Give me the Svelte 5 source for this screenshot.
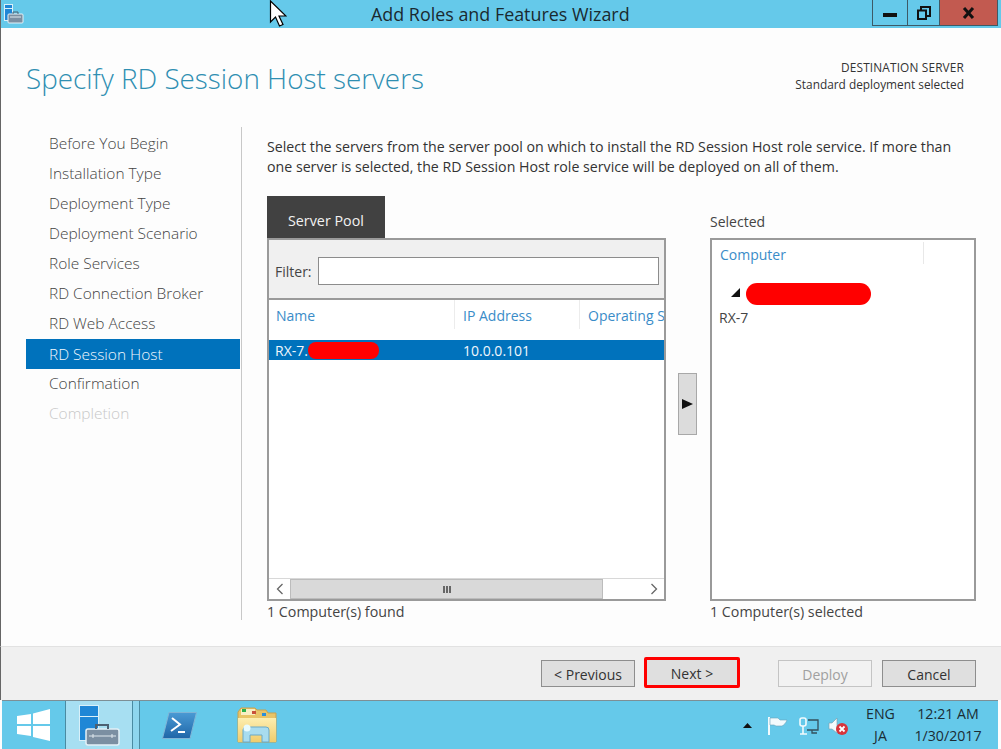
<script>
  const steps = [
    "Before You Begin", "Installation Type", "Deployment Type", "Deployment Scenario",
    "Role Services", "RD Connection Broker", "RD Web Access", "RD Session Host",
    "Confirmation", "Completion"
  ];
  const activeStep = "RD Session Host";
</script>

<div class="window">
  <header class="titlebar">
    <svg class="app-icon" width="20" height="20" viewBox="0 0 20 20">
      <rect x="0" y="0" width="9" height="17" fill="#d9f0f9" />
      <rect x="1" y="1" width="7" height="3" fill="#1f87d6" />
      <rect x="1" y="5" width="7" height="11" fill="#1f87d6" />
      <rect x="4" y="10" width="15" height="9" rx="1" fill="#7b8fa2" stroke="#e4f1f7" />
      <path d="M9 10V8h5v2" fill="none" stroke="#4c6072" />
      <path d="M6 13h11" stroke="#dfe9ef" />
    </svg>
    <div class="title">Add Roles and Features Wizard</div>
    <div class="controls">
      <div class="ctl">
        <span class="min"></span>
      </div>
      <div class="ctl restore">
        <svg width="14" height="14" viewBox="0 0 14 14"><path d="M1 4.500h8v8.500H1zM4 4V1h9v9h-3" fill="none" stroke="#111" stroke-width="2" /></svg>
      </div>
      <div class="ctl close">
        <svg width="14" height="12" viewBox="0 0 14 12"><path d="M2 1l9 10M11 1l-9 10" stroke="#111" stroke-width="3" /></svg>
      </div>
    </div>
  </header>

  <div class="page">
    <div class="page-head">
      <h1>Specify RD Session Host servers</h1>
      <div class="dest">
        <div class="dest-top">DESTINATION SERVER</div>
        <div>Standard deployment selected</div>
      </div>
    </div>

    <div class="main">
      <nav class="steps">
        {#each steps as step}
          <div class="step" class:active={step === activeStep} class:disabled={step === "Completion"}>{step}</div>
        {/each}
      </nav>

      <section class="content">
        <p class="intro">Select the servers from the server pool on which to install the RD Session Host role service. If more than one server is selected, the RD Session Host role service will be deployed on all of them.</p>

        <div class="pickers">
          <div class="pool">
            <div class="tab">Server Pool</div>
            <div class="box pool-box">
              <div class="filter">
                <label for="flt">Filter:</label>
                <input id="flt" type="text" />
              </div>
              <div class="cols">
                <span class="col c1">Name</span>
                <span class="col c2">IP Address</span>
                <span class="col c3">Operating System</span>
              </div>
              <div class="row">
                <span class="c1 cell">RX-7.<i class="redact small"></i></span>
                <span class="c2 cell">10.0.0.101</span>
              </div>
              <div class="spacer"></div>
              <div class="scrollbar">
                <span class="arrow"><svg width="8" height="12" viewBox="0 0 8 12"><path d="M6.500 1L1.500 6l5 5" fill="none" stroke="#666" stroke-width="1.300" /></svg></span>
                <span class="thumb"><i></i><i></i><i></i></span>
                <span class="track"></span>
                <span class="arrow"><svg width="8" height="12" viewBox="0 0 8 12"><path d="M1.500 1l5 5-5 5" fill="none" stroke="#666" stroke-width="1.300" /></svg></span>
              </div>
            </div>
            <div class="count">1 Computer(s) found</div>
          </div>

          <div class="mover">
            <div class="move-btn"><svg width="11" height="10" viewBox="0 0 11 10"><path d="M0 0l11 5-11 5z" fill="#111" /></svg></div>
          </div>

          <div class="selected">
            <div class="sel-label">Selected</div>
            <div class="box sel-box">
              <div class="sel-head"><span>Computer</span></div>
              <div class="tree-node">
                <svg width="9" height="9" viewBox="0 0 9 9"><path d="M9 0v9H0z" fill="#111" /></svg>
                <i class="redact big"></i>
              </div>
              <div class="leaf">RX-7</div>
            </div>
            <div class="count">1 Computer(s) selected</div>
          </div>
        </div>
      </section>
    </div>
  </div>

  <footer class="actions">
    <button>&lt; Previous</button>
    <button class="next">Next &gt;</button>
    <button class="deploy" disabled>Deploy</button>
    <button>Cancel</button>
  </footer>

  <div class="taskbar">
    <div class="tb-start">
      <svg width="33" height="32" viewBox="0 0 33 32"><path d="M0 7l14-2v10H0zM16 4.500L33 0v15H16zM0 17h14v10L0 25zM16 17h17v15l-17-4z" fill="#fff" /></svg>
    </div>
    <div class="tb-active">
      <svg width="41" height="41" viewBox="0 0 41 41">
        <rect x="0" y="0" width="20" height="36" fill="#d9f0f9" />
        <rect x="1" y="1" width="18" height="10" fill="#1f87d6" />
        <rect x="1" y="12" width="18" height="23" fill="#1f87d6" />
        <rect x="7" y="24" width="33" height="16" rx="2" fill="#7b8fa2" stroke="#e4f1f7" stroke-width="1.500" />
        <path d="M17 24v-4h12v4" fill="none" stroke="#4c6072" stroke-width="2" />
        <path d="M10 31h27M14 29v4M33 29v4" stroke="#e0e8ee" />
      </svg>
    </div>
    <div class="tb-sep"></div>
    <div class="tb-app ps">
      <svg width="35" height="27" viewBox="0 0 35 27">
        <defs>
          <linearGradient id="psfill" x1="0" y1="0" x2="0" y2="1">
            <stop offset="0" stop-color="#4a9ad4" />
            <stop offset="1" stop-color="#1f66a8" />
          </linearGradient>
        </defs>
        <path d="M7 .500h27.500L28 26.500H.500z" fill="url(#psfill)" stroke="#7fb4d6" />
        <path d="M10 6l8 6.500-9 6.500" fill="none" stroke="#fff" stroke-width="2" />
        <path d="M16 20h7" stroke="#fff" stroke-width="2" />
      </svg>
    </div>
    <div class="tb-app folder">
      <svg width="40" height="36" viewBox="0 0 40 36">
        <defs>
          <linearGradient id="folderfill" x1="0" y1="0" x2="0" y2="1">
            <stop offset="0" stop-color="#fdeeb0" />
            <stop offset="1" stop-color="#f0cc6c" />
          </linearGradient>
        </defs>
        <path d="M1 5l3-4h14l2 2h9l2 3h8v29H1z" fill="#e8c468" stroke="#c9a24f" />
        <rect x="4" y="2" width="14" height="6" fill="#f8eec4" />
        <rect x="5" y="2" width="4" height="3" fill="#2bb24c" />
        <rect x="15" y="4" width="4" height="3" fill="#c9503a" />
        <rect x="25" y="6" width="4" height="3" fill="#2c8fd9" />
        <path d="M1 11h38v24H1z" fill="url(#folderfill)" />
        <path d="M6 35V23a3 3 0 013-3h20a3 3 0 013 3v12h-7v-7H13v7z" fill="#a8dcef" stroke="#6ba9c6" />
        <circle cx="10" cy="21" r="3.500" fill="#e8fbff" />
      </svg>
    </div>
    <div class="tray">
      <svg class="caret" width="9" height="5" viewBox="0 0 9 5"><path d="M0 5l4.500-5 4.500 5z" fill="#111" /></svg>
      <svg class="ti flag" width="20" height="18" viewBox="0 0 20 18"><path d="M1 0v18" stroke="#f2fafd" stroke-width="2" /><path d="M2 1h8l2 2h7c-1 3-3 5-5 6H8L6 8H2z" fill="#f2fafd" stroke="#6aa3ba" stroke-width=".6" /></svg>
      <svg class="ti net" width="20" height="18" viewBox="0 0 20 18"><rect x="1" y="1" width="6" height="8" rx="2" fill="none" stroke="#f2fafd" stroke-width="1.600" /><path d="M4 9v8M1 17h7" stroke="#f2fafd" stroke-width="1.600" /><path d="M9 3h10v10H8M13 13v3h5" fill="none" stroke="#33505d" stroke-width="1.300" /></svg>
      <svg class="ti snd" width="21" height="18" viewBox="0 0 21 18"><path d="M1 6h3l5-5v15l-5-4H1z" fill="#f2fafd" stroke="#7b9aa8" stroke-width=".6" /><circle cx="14" cy="12" r="6" fill="#d8343a" /><path d="M11.500 9.500l5 5M16.500 9.500l-5 5" stroke="#fff" stroke-width="1.800" /></svg>
      <div class="lang"><div>ENG</div><div>JA</div></div>
      <div class="clock"><div>12:21 AM</div><div>1/30/2017</div></div>
    </div>
  </div>

  <svg class="cursor" width="18" height="28" viewBox="0 0 18 28">
    <path d="M1.500 1v21l5-5 4 9 3.500-1.500-4-8.500h7z" fill="#fff" stroke="#000" stroke-width="1.200" />
  </svg>
</div>

<style>
  :global(body) {
    margin: 0;
    background: #fff;
  }

  .window {
    position: relative;
    width: 1001px;
    height: 749px;
    display: flex;
    flex-direction: column;
    overflow: hidden;
    box-sizing: border-box;
    background: #fdfdfd;
    font-family: "Open Sans", "Noto Sans", sans-serif;
    font-size: 14px;
    color: #333;
  }

  .titlebar {
    flex: 0 0 28px;
    display: flex;
    align-items: flex-start;
    background: #65c9ea;
    border-left: 1px solid #666;
    position: relative;
  }

  .app-icon {
    margin-left: 3px;
    margin-top: 4px;
  }

  .title {
    flex: 1;
    padding-left: 347px;
    padding-top: 3px;
    font-size: 17.900px;
    line-height: 22px;
    color: #1a2a30;
  }

  .controls {
    display: flex;
    margin-right: 3px;
    height: 25px;
    border: 1px solid #3d5a66;
    border-top: 0;
  }

  .ctl {
    width: 34px;
    display: flex;
    align-items: center;
    justify-content: center;
    border-right: 1px solid #3d5a66;
  }

  .min {
    display: block;
    width: 14px;
    height: 4px;
    margin-top: 4px;
    background: #111;
  }

  .restore {
    width: 31px;
  }

  .close {
    width: 57px;
    background: #c25a50;
    border-right: 0;
  }

  .page {
    flex: 1;
    display: flex;
    flex-direction: column;
    border-left: 1px solid #666;
    min-height: 0;
  }

  .page-head {
    display: flex;
    justify-content: space-between;
    height: 99px;
    box-sizing: border-box;
    padding: 0 37px 0 25px;
  }

  h1 {
    margin: 30px 0 0;
    font-weight: 300;
    font-size: 27.850px;
    line-height: 40px;
    color: #2f8fb2;
  }

  .dest {
    padding-top: 31px;
    text-align: right;
    font-size: 11.850px;
    line-height: 17px;
    color: #333;
  }

  .dest-top {
    letter-spacing: 0.15px;
  }

  .main {
    flex: 1;
    display: flex;
    min-height: 0;
  }

  .steps {
    margin-left: 25px;
    height: 493px;
    padding-top: 2px;
    box-sizing: border-box;
    border-right: 1px solid #c8c8c8;
    flex: 0 0 216px;
  }

  .step {
    height: 30px;
    width: 214px;
    box-sizing: border-box;
    padding-left: 23px;
    line-height: 28px;
    font-size: 15.450px;
    font-weight: 300;
    color: #444;
  }

  .step.active {
    background: #0072bc;
    color: #f2f8fc;
    line-height: 30px;
  }

  .step.disabled {
    color: #c8c8c8;
  }

  .content {
    flex: 1;
    padding-left: 25px;
  }

  .intro {
    margin: 10px 0 0;
    line-height: 20px;
    font-size: 14.200px;
    color: #333;
    width: 700px;
  }

  .pickers {
    display: flex;
    margin-top: 19px;
  }

  .pool {
    width: 399px;
    display: flex;
    flex-direction: column;
  }

  .tab {
    width: 118px;
    height: 42px;
    box-sizing: border-box;
    padding: 15px 0 0 21px;
    line-height: 19px;
    font-size: 14.300px;
    background: #414141;
    color: #f2f2f2;
  }

  .box {
    height: 363px;
    box-sizing: border-box;
    border: 2px solid #9a9a9a;
    background: #fff;
    display: flex;
    flex-direction: column;
  }

  .filter {
    height: 60px;
    flex: none;
    box-sizing: border-box;
    background: #f0f0f0;
    border-bottom: 2px solid #9a9a9a;
    display: flex;
    align-items: center;
    padding: 4px 5px 0 6px;
    gap: 6px;
  }

  .filter label {
    color: #444;
  }

  .filter input {
    flex: 1;
    min-width: 0;
    height: 28px;
    box-sizing: border-box;
    border: 1px solid #8c8c8c;
    background: #fff;
  }

  .cols {
    height: 40px;
    flex: none;
    display: flex;
    overflow: hidden;
  }

  .col {
    height: 29px;
    padding-top: 6px;
    color: #3a8cc8;
    white-space: nowrap;
    border-right: 1px solid #ececec;
  }

  .c1 {
    width: 186px;
    padding-left: 7px;
    flex: none;
    box-sizing: border-box;
  }

  .c2 {
    width: 125px;
    padding-left: 8px;
    flex: none;
    box-sizing: border-box;
  }

  .c3 {
    padding-left: 8px;
    border-right: 0;
    flex: none;
  }

  .row {
    height: 20px;
    flex: none;
    display: flex;
    align-items: center;
    background: #0072bc;
    color: #f0f7fc;
  }

  .cell {
    position: relative;
    padding-left: 6px;
  }

  .row .c2 {
    padding-left: 8px;
  }

  .redact {
    display: block;
    position: absolute;
    background: #ff0000;
  }

  .redact.small {
    left: 39px;
    top: 1px;
    width: 71px;
    height: 17px;
    border-radius: 8px;
  }

  .spacer {
    flex: 1;
  }

  .scrollbar {
    height: 21px;
    flex: none;
    display: flex;
    border-top: 1px solid #d8d8d8;
    box-sizing: border-box;
    background: #fff;
  }

  .arrow {
    width: 21px;
    display: flex;
    align-items: center;
    justify-content: center;
    flex: none;
  }

  .thumb {
    width: 313px;
    flex: none;
    background: #d9d9d9;
    border: 1px solid #bcbcbc;
    box-sizing: border-box;
    display: flex;
    align-items: center;
    justify-content: center;
    gap: 1px;
  }

  .thumb i {
    display: block;
    width: 2px;
    height: 7px;
    background: #666;
  }

  .track {
    flex: 1;
  }

  .count {
    margin-top: 1px;
    line-height: 19px;
    font-size: 14.250px;
    color: #444;
  }

  .mover {
    width: 44px;
    padding-top: 177px;
    padding-left: 12px;
    box-sizing: border-box;
    display: flex;
  }

  .move-btn {
    width: 19px;
    height: 62px;
    box-sizing: border-box;
    background: #dcdcdc;
    border: 1px solid #a8a8a8;
    display: flex;
    align-items: center;
    justify-content: center;
  }

  .selected {
    width: 266px;
    display: flex;
    flex-direction: column;
  }

  .sel-label {
    height: 42px;
    box-sizing: border-box;
    padding-top: 16px;
    line-height: 20px;
    color: #444;
  }

  .sel-head {
    height: 22px;
    margin-top: 2px;
    width: 212px;
    padding-left: 8px;
    box-sizing: border-box;
    color: #3a8cc8;
    border-right: 1px solid #e8e8e8;
    line-height: 26px;
  }

  .tree-node {
    position: relative;
    height: 24px;
    margin-top: 19px;
    flex: none;
  }

  .tree-node svg {
    position: absolute;
    left: 19px;
    top: 5px;
  }

  .redact.big {
    left: 34px;
    top: 0;
    width: 125px;
    height: 22px;
    border-radius: 11px;
  }

  .leaf {
    padding-left: 7px;
    line-height: 22px;
    color: #444;
  }

  .actions {
    flex: 0 0 54px;
    box-sizing: border-box;
    background: #f0f0f0;
    border-top: 1px solid #e2e2e2;
    border-left: 1px solid #666;
    display: flex;
    justify-content: flex-end;
    align-items: flex-start;
    padding: 13px 25px 0 0;
    gap: 10px;
  }

  button {
    width: 94px;
    height: 27px;
    box-sizing: border-box;
    padding: 1px 0 0;
    font: inherit;
    color: #333;
    background: #dfdfdf;
    border: 1px solid #8e8e8e;
  }

  .next {
    width: 96px;
    height: 31px;
    margin-top: -3px;
    margin-left: -1px;
    border: 3px solid #f00;
    border-radius: 2px;
  }

  .deploy {
    margin-left: 28px;
    color: #a0a0a0;
    background: #f2f2f2;
    border-color: #c4c4c4;
  }

  .taskbar {
    flex: 0 0 49px;
    display: flex;
    align-items: stretch;
    box-sizing: border-box;
    margin-left: 2px;
    margin-right: 3px;
    background: #65c9ea;
    border-top: 1px solid #7d8f96;
    position: relative;
  }

  .tb-start {
    width: 63px;
    display: flex;
    align-items: center;
    justify-content: center;
    border-right: 1px solid #4a8ba2;
  }

  .tb-active {
    width: 66px;
    display: flex;
    align-items: center;
    justify-content: center;
    background: #a7dff2;
    border-right: 1px solid #4a8ba2;
  }

  .tb-sep {
    width: 6px;
    background: #8ed6ee;
    border-right: 1px solid #4a8ba2;
  }

  .tb-app {
    display: flex;
    align-items: center;
  }

  .ps {
    margin-left: 22px;
  }

  .folder {
    margin-left: 40px;
  }

  .tray {
    margin-left: auto;
    display: flex;
    align-items: center;
  }

  .caret {
    margin-right: 16px;
  }

  .ti {
    margin-top: 2px;
  }

  .flag {
    margin-right: 11px;
  }

  .net {
    margin-right: 9px;
  }

  .snd {
    margin-right: 5px;
  }

  .lang {
    width: 53px;
    margin-right: 3px;
    text-align: center;
    line-height: 22px;
    font-size: 14.200px;
    color: #1b2d35;
  }

  .clock {
    width: 76px;
    margin-right: 12px;
    text-align: center;
    line-height: 22px;
    font-size: 14.200px;
    color: #1b2d35;
  }

  .cursor {
    position: absolute;
    left: 269px;
    top: 0;
  }
</style>
